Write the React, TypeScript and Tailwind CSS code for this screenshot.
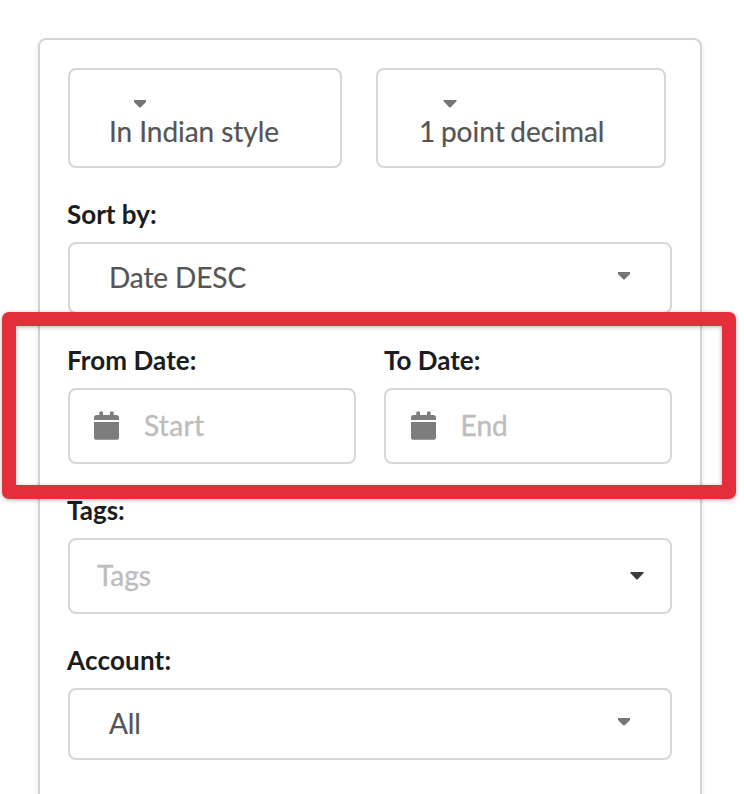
import React from "react";

const Caret = ({ className = "", clipped = false }: { className?: string; clipped?: boolean }) => (
  <svg className={`block h-2 w-[14px] ${className}`} viewBox="0 0 14 8">
    <path
      d={clipped ? "M1 0H13V2L7.8 7.2Q7 8 6.2 7.2L1 2Z" : "M.8 0H13.2Q14 .4 13.4 1.2L7.8 7.2Q7 8 6.2 7.2L.6 1.2Q0 .4 .8 0Z"}
      fill="currentColor"
    />
  </svg>
);

const CalendarIcon = () => (
  <svg className="-mt-[2px] block h-[29px] w-[25px] shrink-0" viewBox="0 0 25 29" fill="#7d7d7d">
    <path d="M2.7 4H5.3V1.4Q5.3 .4 6.3 .4H8Q9 .4 9 1.4V4H16V1.4Q16 .4 17 .4H18.7Q19.7 .4 19.7 1.4V4H22.3Q25 4 25 6.6V9.1H0V6.6Q0 4 2.7 4Z" />
    <path d="M0 11H25V26.2Q25 28.8 22.3 28.8H2.7Q0 28.8 0 26.2Z" />
  </svg>
);

const Label = ({ children, className = "-ml-px" }: { children: React.ReactNode; className?: string }) => (
  <div className={`-mt-[3px] mb-[3px] h-[38px] text-[26px] font-bold leading-[26px] text-[#1b1c1d] ${className}`}>{children}</div>
);

const box = "rounded-[8px] border-2 border-[#d6d6d7] bg-white";
const valueText = "text-[28px] leading-[36px] text-[#555555] [-webkit-text-stroke:0.2px_#555555]";
const hintText = "text-[28px] leading-[36px] text-[#bdbdbd] [-webkit-text-stroke:0.4px_#bdbdbd]";

const NumberStyle = ({ text, size, textPad, caretPad, clipped }: { text: string; size: string; textPad: string; caretPad: string; clipped?: boolean }) => (
  <div className={`${box} h-[100px] ${size}`}>
    <Caret clipped={clipped} className={`mt-[30px] text-[#757575] ${caretPad}`} />
    <div className={`mt-[5px] whitespace-nowrap ${valueText} ${textPad}`}>{text}</div>
  </div>
);

const Select = ({ text }: { text: string }) => (
  <div className={`${box} flex h-[72px] w-[604px] items-center justify-between px-[39px]`}>
    <span className={`-mt-[2px] tracking-[-0.1px] ${valueText}`}>{text}</span>
    <Caret clipped className="-mt-1 text-[#757575]" />
  </div>
);

const DateField = ({ label, placeholder, labelClass, iconPad, hintClass }: { label: string; placeholder: string; labelClass: string; iconPad: string; hintClass: string }) => (
  <div className="w-[288px]">
    <Label className={labelClass}>{label}</Label>
    <div className={`${box} flex h-[76px] items-center ${iconPad}`}>
      <CalendarIcon />
      <span className={`-mt-[2px] ${hintClass} ${hintText}`}>{placeholder}</span>
    </div>
  </div>
);

export default function App() {
  return (
    <div className="relative h-[794px] w-[744px] overflow-hidden bg-white pl-[38px] pt-[38px] font-['Lato',sans-serif]">
      <div className="h-[840px] w-[664px] rounded-[8px] border-2 border-[#d4d4d5] pl-[28px] pt-[28px] shadow-[0_2px_4px_rgba(34,36,38,0.12)]">
        <div className="flex gap-[34px]">
          <NumberStyle clipped text="In Indian style" size="w-[274px]" textPad="pl-[39px] tracking-[-0.05px]" caretPad="ml-[63px]" />
          <NumberStyle text="1 point decimal" size="w-[290px]" textPad="pl-[41px] [word-spacing:-1.5px]" caretPad="ml-[64.5px]" />
        </div>
        <div className="mt-[36px]">
          <Label>Sort by:</Label>
          <Select text="Date DESC" />
        </div>
        <div className="mt-[36px] flex gap-[28px]">
          <DateField label="From Date:" placeholder="Start" labelClass="-ml-px tracking-[0.1px]" iconPad="pl-[24px]" hintClass="ml-[25px] tracking-[0.3px]" />
          <DateField label="To Date:" placeholder="End" labelClass="ml-0" iconPad="pl-[25px]" hintClass="ml-[24.5px] tracking-[0.1px]" />
        </div>
        <div className="mt-[36px]">
          <Label>Tags:</Label>
          <div className={`${box} flex h-[76px] w-[604px] items-center justify-between pl-[27px] pr-[26px]`}>
            <span className={`-mt-[2px] ${hintText}`}>Tags</span>
            <Caret className="text-[#3c3c3c]" />
          </div>
        </div>
        <div className="mt-[36px]">
          <Label className="-ml-px tracking-[0.2px]">Account:</Label>
          <Select text="All" />
        </div>
      </div>
      <div className="pointer-events-none absolute left-[2px] top-[312px] h-[186.5px] w-[734px] rounded-[7px] border-[14px] border-[#e42f3b] drop-shadow-[0_1.5px_2px_rgba(0,0,0,0.3)]" />
    </div>
  );
}
